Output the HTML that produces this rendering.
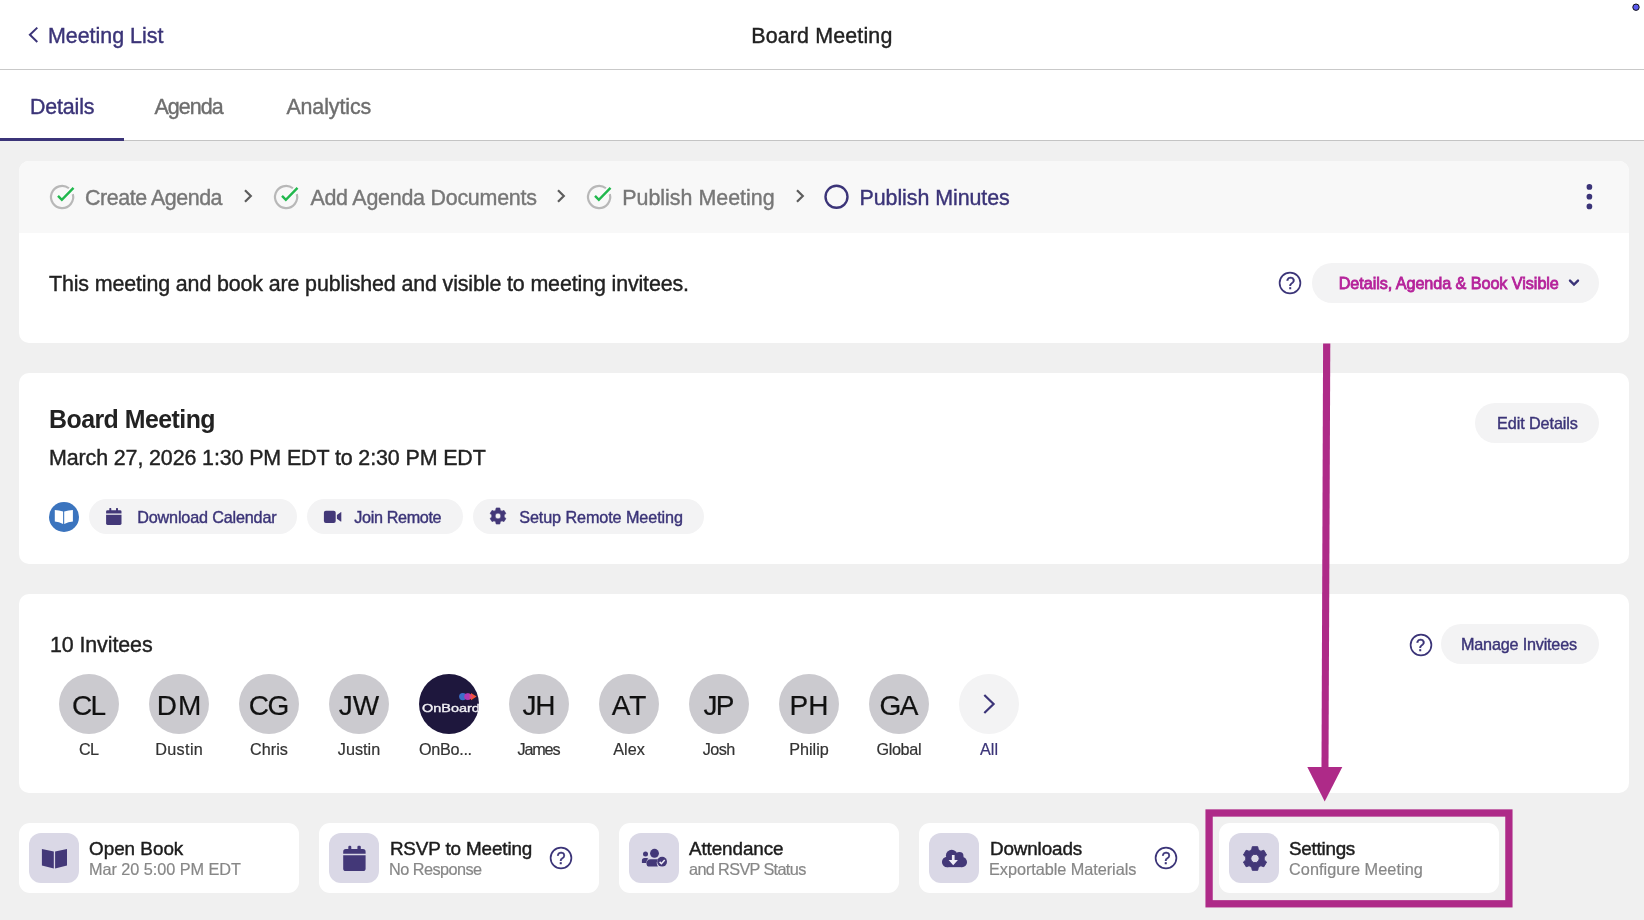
<!DOCTYPE html>
<html lang="en">
<head>
<meta charset="utf-8">
<title>Board Meeting</title>
<style>
:root{--f:"Liberation Sans",sans-serif;--p:#3b3478;--bg:#f0f0f0;--m:#ae2a88;}
*{box-sizing:border-box;margin:0;padding:0}
html,body{width:1644px;height:920px;overflow:hidden;background:var(--bg);font-family:var(--f);color:#222;}
body{position:relative;font-size:21.43px;-webkit-text-stroke:0.4px}
#app{position:absolute;left:0;top:0;width:1644px;height:920px;will-change:transform}
.abs{position:absolute;white-space:nowrap;line-height:1}
header{position:absolute;left:0;top:0;width:1644px;height:70px;background:#fff;border-bottom:1px solid #c9c9c9}
nav{position:absolute;left:0;top:70px;width:1644px;height:71px;background:#fff;border-bottom:1px solid #c4c4c4}
nav .ul{position:absolute;left:0;top:68px;width:124px;height:3px;background:var(--p)}
.card{position:absolute;left:19px;width:1610px;background:#fff;border-radius:10px;overflow:hidden}
.strip{position:absolute;left:0;top:0;width:100%;height:72px;background:#f8f8f8}
.pill{position:absolute;height:35px;border-radius:18px;background:#f3f3f4;color:var(--p);font-size:16.2px}
.pill.big{height:40px;border-radius:20px}
.pill svg{position:absolute}
.help{width:24px;height:24px;color:var(--p);font-size:16.2px;font-weight:400;text-align:center;-webkit-text-stroke:0.45px}
.help svg{position:absolute;left:0;top:0}
.help span{position:absolute;left:0;top:0;width:24px;line-height:25.0px;text-align:center}
.tile{position:absolute;top:823px;width:280px;height:70px;background:#fff;border-radius:11px}
.tile .ic{position:absolute;left:10px;top:10px;width:50px;height:50px;border-radius:12px;background:#dad8e6}
.tile .ic svg{display:block}
.tile .t{font-size:18.85px;font-weight:500;color:#1c1c1c;-webkit-text-stroke:0.45px}
.tile .s{font-size:16.28px;color:#878787;-webkit-text-stroke:0.2px}
.av{position:absolute;top:80px;width:60px;height:60px;border-radius:50%;background:#cbcacf;color:#111;font-size:28px;text-align:center;line-height:60px;overflow:hidden;-webkit-text-stroke:0.2px}
.av.ob{background:#1e173d}
.nm{position:absolute;top:147px;width:90px;text-align:center;font-size:16.2px;color:#333;line-height:1;-webkit-text-stroke:0.2px}
</style>
</head>
<body>
<div id="app">
<header>
  <svg class="abs" style="left:26px;top:25px" width="16" height="20" viewBox="0 0 16 20"><path d="M11.3 2.6L3.9 9.8L11.3 17" fill="none" stroke="#3b3478" stroke-width="2"/></svg>
  <div id="t2" class="abs tx " style="left:47.90px;top:26.00px;color:var(--p);letter-spacing:0.000px;">Meeting List</div>
  <div id="t3" class="abs tx " style="left:751.20px;top:26.00px;color:#222;letter-spacing:0.150px;">Board Meeting</div>
  <svg class="abs" style="left:1630px;top:1px" width="12" height="12" viewBox="0 0 12 12"><circle cx="6" cy="6.2" r="3.2" fill="#5b5bf0" stroke="#111" stroke-width="1"/></svg>
</header>
<nav>
  <div id="t4" class="abs tx " style="left:29.90px;top:27.00px;color:var(--p);letter-spacing:-0.150px;">Details</div>
  <div id="t5" class="abs tx " style="left:154.40px;top:27.00px;color:#6e6e6e;letter-spacing:-0.900px;">Agenda</div>
  <div id="t6" class="abs tx " style="left:286.40px;top:27.00px;color:#6e6e6e;letter-spacing:-0.113px;">Analytics</div>
  <div class="ul"></div>
</nav>

<div class="card" id="c1" style="top:161px;height:182px">
  <div class="strip"></div>
  <svg class="abs" style="left:28px;top:21px" width="30" height="30" viewBox="0 0 30 30"><path d="M25.82 12.13A11.1 11.1 0 1 1 21.93 6.25" fill="none" stroke="#b8b8b8" stroke-width="2.2"/><path d="M11 13.85L14.85 17.8L26.5 5.8" fill="none" stroke="#21b84d" stroke-width="2.4"/></svg><div id="t7" class="abs tx " style="left:66.00px;top:27.00px;color:#777;letter-spacing:-0.450px;">Create Agenda</div><svg class="abs" style="left:223.85px;top:27.05px" width="12" height="16" viewBox="0 0 12 16"><path d="M2 2.2L7.8 8L2 13.8" fill="none" stroke="#5e5e5e" stroke-width="2.2"/></svg>
  <svg class="abs" style="left:252.1px;top:21px" width="30" height="30" viewBox="0 0 30 30"><path d="M25.82 12.13A11.1 11.1 0 1 1 21.93 6.25" fill="none" stroke="#b8b8b8" stroke-width="2.2"/><path d="M11 13.85L14.85 17.8L26.5 5.8" fill="none" stroke="#21b84d" stroke-width="2.4"/></svg><div id="t8" class="abs tx " style="left:291.40px;top:27.00px;color:#777;letter-spacing:-0.237px;">Add Agenda Documents</div><svg class="abs" style="left:537.4px;top:27.05px" width="12" height="16" viewBox="0 0 12 16"><path d="M2 2.2L7.8 8L2 13.8" fill="none" stroke="#5e5e5e" stroke-width="2.2"/></svg>
  <svg class="abs" style="left:565.1px;top:21px" width="30" height="30" viewBox="0 0 30 30"><path d="M25.82 12.13A11.1 11.1 0 1 1 21.93 6.25" fill="none" stroke="#b8b8b8" stroke-width="2.2"/><path d="M11 13.85L14.85 17.8L26.5 5.8" fill="none" stroke="#21b84d" stroke-width="2.4"/></svg><div id="t9" class="abs tx " style="left:603.20px;top:27.00px;color:#777;letter-spacing:0.000px;">Publish Meeting</div><svg class="abs" style="left:775.8px;top:27.05px" width="12" height="16" viewBox="0 0 12 16"><path d="M2 2.2L7.8 8L2 13.8" fill="none" stroke="#5e5e5e" stroke-width="2.2"/></svg>
  <svg class="abs" style="left:804px;top:23px" width="28" height="28" viewBox="0 0 28 28"><circle cx="13.5" cy="12.8" r="11" fill="none" stroke="#3b3478" stroke-width="2.4"/></svg>
  <div id="t10" class="abs tx " style="left:840.50px;top:27.00px;color:var(--p);letter-spacing:-0.064px;">Publish Minutes</div>
  <svg class="abs" style="left:1562px;top:20px" width="16" height="32" viewBox="0 0 16 32"><g fill="#3b3478"><circle cx="8.4" cy="5.9" r="2.85"/><circle cx="8.4" cy="15.7" r="2.85"/><circle cx="8.4" cy="25.4" r="2.85"/></g></svg>
  <div id="t11" class="abs tx " style="left:30.00px;top:113.00px;;letter-spacing:-0.134px;">This meeting and book are published and visible to meeting invitees.</div>
  <div class="abs help" style="left:1259.40px;top:110.00px"><svg width="24" height="24" viewBox="0 0 24 24"><circle cx="12" cy="12" r="10.4" fill="none" stroke="#3b3478" stroke-width="1.7"/></svg><span>?</span></div>
  <div class="pill big" style="left:1293px;top:102px;width:287px"><div id="t12" class="abs tx " style="left:26.70px;top:12.00px;color:#b5229a;-webkit-text-stroke:0.8px;letter-spacing:-0.062px;">Details, Agenda &amp; Book Visible</div><svg style="left:254px;top:14px" width="16" height="12" viewBox="0 0 16 12"><path d="M4 3.6L8 7.6L12 3.6" fill="none" stroke="#3b3478" stroke-width="2.4" stroke-linecap="round"/></svg></div>
</div>

<div class="card" id="c2" style="top:373px;height:191px">
  <div id="t13" class="abs tx " style="left:30.00px;top:34.00px;font-size:24.9px;font-weight:700;color:#222;-webkit-text-stroke:0;letter-spacing:-0.525px;">Board Meeting</div>
  <div id="t14" class="abs tx " style="left:30.00px;top:75.00px;;letter-spacing:-0.113px;">March 27, 2026 1:30 PM EDT to 2:30 PM EDT</div>
  <div class="pill big" style="left:1456px;top:30px;width:124px"><div id="t15" class="abs tx " style="left:22.00px;top:12.00px;;letter-spacing:-0.082px;">Edit Details</div></div>
  <svg class="abs" style="left:30px;top:129px" width="30" height="30" viewBox="0 0 30 30"><circle cx="15" cy="15" r="15" fill="#3b74be"/><path d="M5.8 7.9Q10 8 14.1 9.5V22Q10 20 5.8 19.6Z M15.2 9.5Q19.5 8 23.9 7.9V19.6Q19.5 20 15.2 22Z" fill="#fff"/></svg>
  <div class="pill" style="left:70px;top:126px;width:208px"><svg style="left:16px;top:8px" width="18" height="19" viewBox="0 0 18 19"><g fill="#433878"><rect x="4.3" y="1.1" width="2" height="4" rx=".6"/><rect x="11" y="1.1" width="2" height="4" rx=".6"/><path d="M1.1 6.5V4.6a1.4 1.4 0 0 1 1.4-1.4h12.6a1.4 1.4 0 0 1 1.4 1.4V6.5Z"/><path d="M1.1 7.7H16.5V16.5a1.4 1.4 0 0 1-1.4 1.4H2.5a1.4 1.4 0 0 1-1.4-1.4Z"/></g></svg><div id="t16" class="abs tx " style="left:48.20px;top:10.00px;;letter-spacing:-0.169px;">Download Calendar</div></div>
  <div class="pill" style="left:288px;top:126px;width:156px"><svg style="left:16px;top:10px" width="20" height="16" viewBox="0 0 20 16"><g fill="#433878"><rect x=".9" y="1.7" width="11.8" height="12.4" rx="2"/><path d="M13.9 6.1L17.7 3.2a.4.4 0 0 1 .6.3V12.3a.4.4 0 0 1-.6.3L13.9 9.8Z"/></g></svg><div id="t17" class="abs tx " style="left:47.30px;top:10.00px;;letter-spacing:-0.360px;">Join Remote</div></div>
  <div class="pill" style="left:454px;top:126px;width:231px"><svg style="left:15px;top:7.4px" width="20" height="20" viewBox="0 0 20 20"><path d="M12.22 4.21L11.84 2.01L8.16 2.01L7.78 4.21A6.2 6.2 0 0 0 6.10 5.18L4.00 4.41L2.16 7.60L3.88 9.03A6.2 6.2 0 0 0 3.88 10.97L2.16 12.40L4.00 15.59L6.10 14.82A6.2 6.2 0 0 0 7.78 15.79L8.16 17.99L11.84 17.99L12.22 15.79A6.2 6.2 0 0 0 13.90 14.82L16.00 15.59L17.84 12.40L16.12 10.97A6.2 6.2 0 0 0 16.12 9.03L17.84 7.60L16.00 4.41L13.90 5.18A6.2 6.2 0 0 0 12.22 4.21ZM12.90 10A2.9 2.9 0 1 0 7.10 10A2.9 2.9 0 1 0 12.90 10Z" fill="#433878" stroke="#433878" stroke-width=".7" stroke-linejoin="round" fill-rule="evenodd"/></svg><div id="t18" class="abs tx " style="left:46.20px;top:10.00px;;letter-spacing:-0.095px;">Setup Remote Meeting</div></div>
</div>

<div class="card" id="c3" style="top:594px;height:199px">
  <div id="t19" class="abs tx " style="left:30.90px;top:41.00px;;letter-spacing:-0.090px;">10 Invitees</div>
  <div class="abs help" style="left:1389.50px;top:39.10px"><svg width="24" height="24" viewBox="0 0 24 24"><circle cx="12" cy="12" r="10.4" fill="none" stroke="#3b3478" stroke-width="1.7"/></svg><span>?</span></div>
  <div class="pill big" style="left:1422px;top:30px;width:158px"><div id="t20" class="abs tx " style="left:20.00px;top:12.00px;;letter-spacing:-0.193px;">Manage Invitees</div></div>
  <div class="av" style="left:40px"><span id="av0" class="tx" style="position:relative;top:2.00px;letter-spacing:-1.600px;margin-right:1.600px;">CL</span></div><div class="nm" style="left:25px"><span id="nm0" class="tx" style="position:relative;top:0.00px;letter-spacing:-0.900px;margin-right:0.900px;">CL</span></div><div class="av" style="left:130px"><span id="av1" class="tx" style="position:relative;top:2.00px;letter-spacing:1.000px;margin-right:-1.000px;">DM</span></div><div class="nm" style="left:115px"><span id="nm1" class="tx" style="position:relative;top:0.00px;letter-spacing:0.360px;margin-right:-0.360px;">Dustin</span></div><div class="av" style="left:220px"><span id="av2" class="tx" style="position:relative;top:2.00px;letter-spacing:-1.600px;margin-right:1.600px;">CG</span></div><div class="nm" style="left:205px"><span id="nm2" class="tx" style="position:relative;top:0.00px;letter-spacing:0.000px;margin-right:-0.000px;">Chris</span></div><div class="av" style="left:310px"><span id="av3" class="tx" style="position:relative;top:2.00px;letter-spacing:0.000px;margin-right:-0.000px;">JW</span></div><div class="nm" style="left:295px"><span id="nm3" class="tx" style="position:relative;top:0.00px;letter-spacing:0.000px;margin-right:-0.000px;">Justin</span></div><div class="av ob" style="left:400px"><svg class="abs" style="left:0;top:0" width="60" height="60" viewBox="0 0 60 60"><circle cx="43.8" cy="22.6" r="3.7" fill="#3b6fc9"/><path d="M48.2 19A3.7 3.7 0 0 1 48.2 26.2A5 5 0 0 0 48.2 19Z" fill="#b23ab4"/><circle cx="48.6" cy="22.6" r="3.4" fill="#b23ab4"/><path d="M52 19L57.6 22.6L52 26.2Z" fill="#f0553a"/><path d="M50.5 19.3L54 22.6L50.5 25.9Z" fill="#e0457a"/></svg><div id="t1" class="abs tx oblogo" style="left:2.60px;top:28.70px;font-size:11.4px;color:#f2f1f6;-webkit-text-stroke:0.35px;transform:scaleX(1.27);transform-origin:0 50%;">OnBoard</div></div><div id="nm4" class="nm tx" style="left:400px;width:60px;text-align:left;overflow:hidden;text-overflow:ellipsis;white-space:nowrap;margin-top:0.00px;margin-left:0.00px;letter-spacing:-0.300px;">OnBo...</div><div class="av" style="left:490px"><span id="av5" class="tx" style="position:relative;top:2.00px;letter-spacing:-1.350px;margin-right:1.350px;">JH</span></div><div class="nm" style="left:475px"><span id="nm5" class="tx" style="position:relative;top:0.00px;letter-spacing:-1.125px;margin-right:1.125px;">James</span></div><div class="av" style="left:580px"><span id="av6" class="tx" style="position:relative;top:2.00px;letter-spacing:0.900px;margin-right:-0.900px;">AT</span></div><div class="nm" style="left:565px"><span id="nm6" class="tx" style="position:relative;top:0.00px;letter-spacing:0.000px;margin-right:-0.000px;">Alex</span></div><div class="av" style="left:670px"><span id="av7" class="tx" style="position:relative;top:2.00px;letter-spacing:-1.600px;margin-right:1.600px;">JP</span></div><div class="nm" style="left:655px"><span id="nm7" class="tx" style="position:relative;top:0.00px;letter-spacing:-0.600px;margin-right:0.600px;">Josh</span></div><div class="av" style="left:760px"><span id="av8" class="tx" style="position:relative;top:2.00px;letter-spacing:0.000px;margin-right:-0.000px;">PH</span></div><div class="nm" style="left:745px"><span id="nm8" class="tx" style="position:relative;top:0.00px;letter-spacing:0.000px;margin-right:-0.000px;">Philip</span></div><div class="av" style="left:850px"><span id="av9" class="tx" style="position:relative;top:2.00px;letter-spacing:-1.600px;margin-right:1.600px;">GA</span></div><div class="nm" style="left:835px"><span id="nm9" class="tx" style="position:relative;top:0.00px;letter-spacing:-0.360px;margin-right:0.360px;">Global</span></div><div class="av" style="left:940px;background:#f3f3f4"><svg class="abs" style="left:20px;top:18px" width="20" height="24" viewBox="0 0 20 24"><path d="M5.3 3L14.6 12L5.3 21" fill="none" stroke="#3b3478" stroke-width="2.2"/></svg></div><div class="nm" style="left:925px;color:#3b3478"><span id="nmAll" class="tx" style="position:relative;top:0.00px;letter-spacing:0.000px;margin-right:-0.000px;">All</span></div>
</div>

<div class="tile" style="left:19px"><div class="ic"><svg width="50" height="50" viewBox="0 0 50 50"><path d="M12.9 15.9L24.8 18.5V35.6L12.9 32.6Z M26.1 18.5L38 15.9V32.6L26.1 35.6Z" fill="#433878"/></svg></div><div id="t21" class="abs tx t" style="left:70.00px;top:17.00px;;letter-spacing:0.000px;">Open Book</div><div id="t22" class="abs tx s" style="left:70.00px;top:38.00px;;letter-spacing:-0.053px;">Mar 20 5:00 PM EDT</div></div>
<div class="tile" style="left:319px"><div class="ic"><svg width="50" height="50" viewBox="0 0 50 50"><g fill="#433878"><rect x="19.3" y="12.8" width="3" height="6" rx="1.2"/><rect x="28.4" y="12.8" width="3.4" height="6" rx="1.2"/><path d="M14.2 20.8V18.7a2.6 2.6 0 0 1 2.6-2.6h17.2a2.6 2.6 0 0 1 2.6 2.6V20.8Z"/><path d="M14.2 22.2H36.6V35.4a2.6 2.6 0 0 1-2.6 2.6H16.8a2.6 2.6 0 0 1-2.6-2.6Z"/></g></svg></div><div id="t23" class="abs tx t" style="left:70.90px;top:17.00px;;letter-spacing:-0.129px;">RSVP to Meeting</div><div id="t24" class="abs tx s" style="left:70.00px;top:38.00px;;letter-spacing:-0.540px;">No Response</div><div class="abs help" style="left:229.90px;top:23.10px"><svg width="24" height="24" viewBox="0 0 24 24"><circle cx="12" cy="12" r="10.4" fill="none" stroke="#3b3478" stroke-width="1.7"/></svg><span>?</span></div></div>
<div class="tile" style="left:619px"><div class="ic"><svg width="50" height="50" viewBox="0 0 50 50"><g fill="#433878"><circle cx="16.5" cy="20.9" r="2.5"/><path d="M12.9 29.9V27.6a2.6 2.6 0 0 1 2.6-2.6h2.2a2.6 2.6 0 0 1 1.6.55A6.2 6.2 0 0 0 17.3 29.9Z"/><circle cx="25.5" cy="20.3" r="4.45"/><path d="M17.8 32.1a4.2 4.2 0 0 1 4.2-5.9h5.8a4.4 4.4 0 0 1 1.2.15A6.3 6.3 0 0 0 28.9 33.5H19.3a1.5 1.5 0 0 1-1.5-1.4Z"/><circle cx="33.1" cy="28.7" r="4.9"/></g><path d="M30.6 28.9L32.4 30.7L35.7 27.1" fill="none" stroke="#f1eff8" stroke-width="1.5"/></svg></div><div id="t25" class="abs tx t" style="left:70.00px;top:17.00px;;letter-spacing:-0.100px;">Attendance</div><div id="t26" class="abs tx s" style="left:70.00px;top:38.00px;;letter-spacing:-0.643px;">and RSVP Status</div></div>
<div class="tile" style="left:919px"><div class="ic"><svg width="50" height="50" viewBox="0 0 50 50"><g fill="#433878"><circle cx="18.1" cy="29" r="5.15"/><circle cx="33" cy="29.1" r="5.05"/><circle cx="22.7" cy="22.5" r="5.8"/><circle cx="30.4" cy="23.2" r="4.1"/><rect x="18" y="24" width="15" height="10.15"/></g><path d="M22.9 22h2.7v5h3.3L24.2 32.2L19.6 27h3.3Z" fill="#eeecf6"/></svg></div><div id="t27" class="abs tx t" style="left:70.90px;top:17.00px;;letter-spacing:-0.113px;">Downloads</div><div id="t28" class="abs tx s" style="left:70.00px;top:38.00px;;letter-spacing:-0.047px;">Exportable Materials</div><div class="abs help" style="left:234.90px;top:23.10px"><svg width="24" height="24" viewBox="0 0 24 24"><circle cx="12" cy="12" r="10.4" fill="none" stroke="#3b3478" stroke-width="1.7"/></svg><span>?</span></div></div>
<div class="tile" style="left:1219px"><div class="ic"><svg width="50" height="50" viewBox="0 0 50 50"><path transform="translate(11 10.5)" d="M18.33 6.32L17.72 3.21L12.28 3.21L11.67 6.32A9.3 9.3 0 0 0 9.15 7.77L6.15 6.75L3.43 11.46L5.81 13.55A9.3 9.3 0 0 0 5.81 16.45L3.43 18.54L6.15 23.25L9.15 22.23A9.3 9.3 0 0 0 11.67 23.68L12.28 26.79L17.72 26.79L18.33 23.68A9.3 9.3 0 0 0 20.85 22.23L23.85 23.25L26.57 18.54L24.19 16.45A9.3 9.3 0 0 0 24.19 13.55L26.57 11.46L23.85 6.75L20.85 7.77A9.3 9.3 0 0 0 18.33 6.32ZM19.20 15A4.2 4.2 0 1 0 10.80 15A4.2 4.2 0 1 0 19.20 15Z" fill="#433878" stroke="#433878" stroke-width="1" stroke-linejoin="round" fill-rule="evenodd"/></svg></div><div id="t29" class="abs tx t" style="left:70.00px;top:17.00px;;letter-spacing:-0.257px;">Settings</div><div id="t30" class="abs tx s" style="left:70.00px;top:38.00px;;letter-spacing:0.056px;">Configure Meeting</div></div>

<svg class="abs" style="left:0;top:0;pointer-events:none" width="1644" height="920" viewBox="0 0 1644 920">
  <path d="M1323.1 343.5H1330.3L1328.5 768H1321.5Z" fill="var(--m)"/>
  <path d="M1307.3 767.1H1342.3L1324.7 801.4Z" fill="var(--m)"/>
  <rect x="1209.1" y="813" width="299.8" height="90.8" fill="none" stroke="var(--m)" stroke-width="7.3"/>
</svg>
</div>
</body>
</html>
